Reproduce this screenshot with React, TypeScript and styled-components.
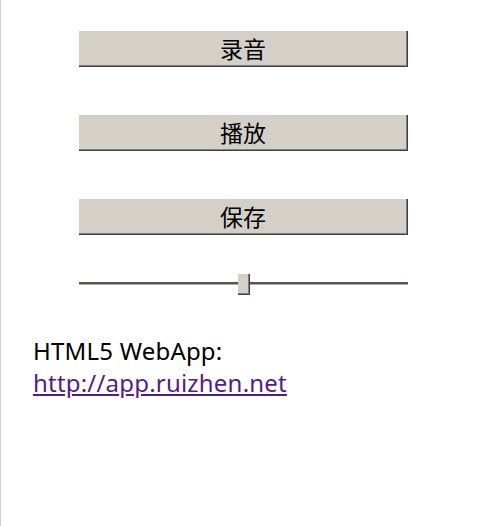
import React from "react";
import styled, { createGlobalStyle } from "styled-components";

const Global = createGlobalStyle`
  html, body { margin: 0; padding: 0; background: #ffffff; }
  body { font-family: "Noto Sans", "Noto Sans CJK SC", sans-serif; }
`;

const Page = styled.div`
  box-sizing: border-box;
  width: 485px;
  height: 526px;
  border-left: 1px solid #d4d0c8;
  padding: 31px 0 0 32px;
  display: flex;
  flex-direction: column;
`;

const Controls = styled.div`
  display: flex;
  flex-direction: column;
  gap: 48px;
  padding-left: 46px;
  width: 329px;
`;

const Button = styled.button`
  box-sizing: border-box;
  width: 329px;
  height: 36px;
  margin: 0;
  padding: 0;
  background: #d4d0c8;
  border: none;
  border-right: 1px solid #404040;
  border-bottom: 1px solid #404040;
  box-shadow: inset -1px -1px 0 #808080;
  font-family: "Noto Sans CJK SC", sans-serif;
  font-size: 23px;
  line-height: 35px;
  color: #000;
  display: flex;
  align-items: center;
  justify-content: center;
`;

const SliderWrap = styled.div`
  position: relative;
  width: 329px;
  height: 21px;
  margin-top: -9px;
`;

const Track = styled.div`
  position: absolute;
  left: 0;
  right: 0;
  top: 8px;
  height: 2px;
  background: #555;
  border-bottom: 1px solid #b0aca4;
`;

const Thumb = styled.div`
  position: absolute;
  top: 0;
  box-sizing: border-box;
  width: 12px;
  height: 21px;
  background: #d4d0c8;
  border-right: 1px solid #404040;
  border-bottom: 1px solid #404040;
  box-shadow: inset -1px -1px 0 #808080;
`;

const Info = styled.div`
  margin-top: 40px;
  font-family: "Noto Sans", sans-serif;
  font-size: 24px;
  line-height: 32px;
  letter-spacing: 0.2px;
  color: #000;
`;

const Link = styled.a`
  color: #551a8b;
  text-decoration: underline;
`;

export default function App() {
  const value = 0.5;
  return (
    <>
      <Global />
      <Page>
        <Controls>
          <Button>录音</Button>
          <Button>播放</Button>
          <Button>保存</Button>
          <SliderWrap>
            <Track />
            <Thumb style={{ left: `${value * (329 - 12)}px` }} />
          </SliderWrap>
        </Controls>
        <Info>
          HTML5 WebApp:
          <br />
          <Link href="#">http://app.ruizhen.net</Link>
        </Info>
      </Page>
    </>
  );
}
